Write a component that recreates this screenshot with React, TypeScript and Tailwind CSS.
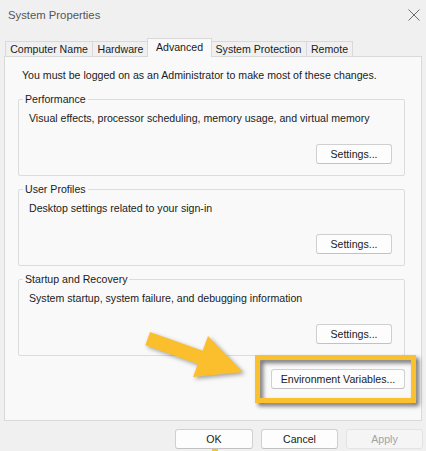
import React from "react";

const font = { fontFamily: '"Liberation Sans", Arial, sans-serif' };

function Btn({ children, className = "" }: { children: React.ReactNode; className?: string }) {
  return (
    <button
      className={
        "h-[20px] rounded-[3px] border border-[#d0d0d0] border-b-[#c2c2c2] bg-[#fdfdfd] text-[10.6px] leading-[14px] text-[#1b1b1b] flex items-center justify-center " +
        className
      }
    >
      {children}
    </button>
  );
}

function Group({ label, desc }: { label: string; desc: string }) {
  return (
    <fieldset className="m-0 p-0 border border-[#dcdcdc] rounded-[2px] w-[387px]">
      <legend className="ml-[4px] px-[2px] leading-[14px] text-[#1b1b1b]">{label}</legend>
      <div className="pl-[10px] pr-[12px] pb-[11px]">
        <p className="mt-[5px] leading-[14px]">{desc}</p>
        <div className="flex justify-end mt-[19px]">
          <Btn className="w-[76px]">Settings...</Btn>
        </div>
      </div>
    </fieldset>
  );
}

function Tab({ label, w, active = false }: { label: string; w: number; active?: boolean }) {
  return (
    <div
      style={{ width: w }}
      className={
        active
          ? "relative z-10 -ml-[2px] -mr-[1px] h-[19px] -mb-px bg-[#f9f9f9] border-l border-t border-r border-[#d9d9d9] flex items-start justify-center pt-[1px] leading-[14px] text-[#1b1b1b]"
          : "h-[15px] border-l border-t border-r border-[#d9d9d9] -ml-px first:ml-0 flex items-center justify-center leading-[14px] text-[#1b1b1b]"
      }
    >
      {label}
    </div>
  );
}

export default function App() {
  return (
    <div style={font} className="relative w-[426px] h-[451px] overflow-hidden bg-[#f0f0f0] text-[10.6px] text-[#1b1b1b]">
      {/* title bar */}
      <div className="h-[30px] flex items-center justify-between pl-[8px] pr-[5px]">
        <span className="text-[11.3px] text-[#555555] leading-[14px]">System Properties</span>
        <svg width="12" height="12" viewBox="0 0 12 12" className="mr-[1px]">
          <path d="M0.5 0.5 L11.5 11.5 M11.5 0.5 L0.5 11.5" stroke="#6a6a6a" strokeWidth="1" fill="none" />
        </svg>
      </div>

      {/* tabs */}
      <div className="pt-[7px] pl-[5px] flex items-end h-[26px]">
        <Tab label="Computer Name" w={88} />
        <Tab label="Hardware" w={57} />
        <Tab label="Advanced" w={65} active />
        <Tab label="System Protection" w={97} />
        <Tab label="Remote" w={47} />
      </div>

      {/* panel */}
      <div className="ml-[4px] w-[418px] h-[365px] border border-[#d9d9d9] bg-[#f9f9f9] pl-[13px] pr-[15px] flex flex-col">
        <p className="pt-[11px] pl-[4px] leading-[14px]">
          You must be logged on as an Administrator to make most of these changes.
        </p>
        <div className="mt-[10px] flex flex-col gap-[6px]">
          <Group label="Performance" desc="Visual effects, processor scheduling, memory usage, and virtual memory" />
          <Group label="User Profiles" desc="Desktop settings related to your sign-in" />
          <Group label="Startup and Recovery" desc="System startup, system failure, and debugging information" />
        </div>
        <div className="flex justify-end mt-[13px] pr-[1px]">
          <Btn className="w-[134px]">Environment Variables...</Btn>
        </div>
      </div>

      {/* bottom buttons */}
      <div className="mt-[8px] flex justify-end gap-[8px] pr-[3px]">
        <Btn className="w-[78px]">OK</Btn>
        <Btn className="w-[77px]">Cancel</Btn>
        <button className="w-[77px] h-[20px] rounded-[3px] border border-[#e3e3e3] bg-[#f5f5f5] text-[10.6px] leading-[14px] text-[#a3a3a3] flex items-center justify-center">
          Apply
        </button>
      </div>

      {/* annotation: highlight frame */}
      <div className="absolute left-[255px] top-[355px] w-[161px] h-[48px] border-[5px] border-[#fbc02d] [filter:drop-shadow(3px_3px_2px_rgba(0,0,0,0.55))]" />

      {/* annotation: arrow */}
      <svg
        className="absolute left-0 top-0 [filter:drop-shadow(2px_2px_2px_rgba(0,0,0,0.35))]"
        width="426"
        height="451"
        viewBox="0 0 426 451"
      >
        <polygon
          points="150,332 202.6,350.7 208,336 243,372 193,377 197.8,363.9 145.3,345.2"
          fill="#fbbf2d"
        />
      </svg>

      {/* small yellow mark under OK */}
      <div className="absolute left-[212px] top-[449px] w-[6px] h-[2px] bg-[#fbc02d]" />
    </div>
  );
}
